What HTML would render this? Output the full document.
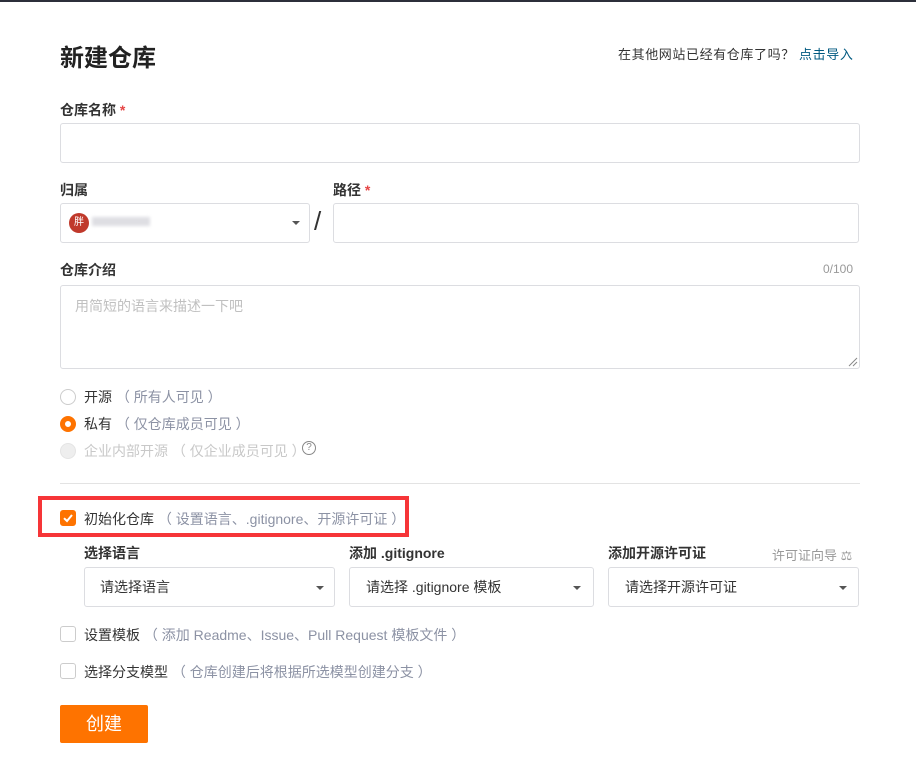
<!DOCTYPE html>
<html><head><meta charset="utf-8"><style>
*{box-sizing:border-box;margin:0;padding:0}
body{width:916px;height:763px;background:#fff;position:relative;overflow:hidden;font-family:"Liberation Sans","Noto Sans CJK SC",sans-serif;color:#333;font-size:14px}
.a{position:absolute;white-space:nowrap}
.box{position:absolute;border:1px solid #dcdde1;border-radius:3px;background:#fff}
.lbl{position:absolute;font-weight:bold;font-size:14px;color:#333;line-height:16px}
.req{color:#e54545}
.caret{position:absolute;width:0;height:0;border-left:4px solid transparent;border-right:4px solid transparent;border-top:4px solid #555}
.radio{position:absolute;width:16px;height:16px;border-radius:50%;border:1px solid #ccc;background:#fff}
.cb{position:absolute;width:16px;height:16px;border-radius:3px;border:1px solid #ccc;background:#fff}
.g{color:#8c92a4}
.t{position:absolute;white-space:nowrap;font-size:14px;line-height:16px}
</style></head><body>
<div class="a" style="left:0;top:0;width:916px;height:2px;background:#2c2f3a"></div>
<div class="a" style="left:60px;top:38px;font-size:24px;font-weight:bold;color:#222">新建仓库</div>
<div class="a" style="left:618px;top:44px;font-size:13px;color:#333;letter-spacing:0.6px">在其他网站已经有仓库了吗？ <span style="color:#005980">点击导入</span></div>

<div class="lbl" style="left:60px;top:102px">仓库名称 <span class="req">*</span></div>
<div class="box" style="left:60px;top:123px;width:800px;height:40px"></div>

<div class="lbl" style="left:60px;top:182px">归属</div>
<div class="box" style="left:60px;top:203px;width:250px;height:40px"></div>
<div class="a" style="left:69px;top:213px;width:20px;height:20px;border-radius:50%;background:#c0392b;color:#fff;font-size:10px;text-align:center;line-height:20px">胖</div>
<div class="a" style="left:92px;top:217px;width:58px;height:9px;background:#dedee3;filter:blur(1.5px)"></div>
<div class="caret" style="left:292px;top:221px"></div>
<div class="a" style="left:314px;top:206px;font-size:26px;color:#333">/</div>
<div class="lbl" style="left:333px;top:182px">路径 <span class="req">*</span></div>
<div class="box" style="left:333px;top:203px;width:526px;height:40px"></div>

<div class="lbl" style="left:60px;top:262px">仓库介绍</div>
<div class="a" style="left:823px;top:262px;font-size:12px;color:#999">0/100</div>
<div class="box" style="left:60px;top:285px;width:800px;height:84px"></div>
<div class="a" style="left:75px;top:296px;font-size:14px;color:#c0c0c0">用简短的语言来描述一下吧</div>
<svg class="a" style="left:848px;top:357px" width="10" height="10"><path d="M1 9L9 1M5 9L9 5" stroke="#888" stroke-width="1"/></svg>

<div class="radio" style="left:60px;top:389px"></div>
<div class="t" style="left:84px;top:389px">开源 <span class="g">（ 所有人可见 ）</span></div>
<div class="radio" style="left:60px;top:416px;border:5px solid #fe7300"></div>
<div class="t" style="left:84px;top:416px">私有 <span class="g">（ 仅仓库成员可见 ）</span></div>
<div class="radio" style="left:60px;top:443px;background:#eee;border-color:#e4e4e4"></div>
<div class="t" style="left:84px;top:443px;color:#c8c8c8">企业内部开源 （ 仅企业成员可见 ）</div>
<div class="a" style="left:302px;top:441px;width:14px;height:14px;border:1px solid #888;border-radius:50%;font-size:10px;color:#888;text-align:center;line-height:12px">?</div>

<div class="a" style="left:60px;top:483px;width:800px;height:1px;background:#e3e3e3"></div>

<div class="a" style="left:38px;top:496px;width:371px;height:41px;border:4px solid #f63538"></div>
<div class="cb" style="left:60px;top:510px;background:#fe7300;border-color:#fe7300"></div>
<svg class="a" style="left:60px;top:510px" width="16" height="16"><path d="M4 8.2L7 11L12 5" stroke="#fff" stroke-width="2" fill="none"/></svg>
<div class="t" style="left:84px;top:511px">初始化仓库 <span class="g">（ 设置语言、.gitignore、开源许可证 ）</span></div>

<div class="lbl" style="left:84px;top:545px">选择语言</div>
<div class="box" style="left:84px;top:567px;width:251px;height:40px"></div>
<div class="t" style="left:100px;top:579px">请选择语言</div>
<div class="caret" style="left:316px;top:586px"></div>
<div class="lbl" style="left:349px;top:545px">添加 .gitignore</div>
<div class="box" style="left:349px;top:567px;width:245px;height:40px"></div>
<div class="t" style="left:366px;top:579px">请选择 .gitignore 模板</div>
<div class="caret" style="left:573px;top:586px"></div>
<div class="lbl" style="left:608px;top:545px">添加开源许可证</div>
<div class="a" style="left:772px;top:545px;font-size:13px;color:#999">许可证向导 ⚖</div>
<div class="box" style="left:608px;top:567px;width:251px;height:40px"></div>
<div class="t" style="left:625px;top:579px">请选择开源许可证</div>
<div class="caret" style="left:839px;top:586px"></div>

<div class="cb" style="left:60px;top:626px"></div>
<div class="t" style="left:84px;top:627px">设置模板 <span class="g">（ 添加 Readme、Issue、Pull Request 模板文件 ）</span></div>
<div class="cb" style="left:60px;top:663px"></div>
<div class="t" style="left:84px;top:664px">选择分支模型 <span class="g">（ 仓库创建后将根据所选模型创建分支 ）</span></div>

<div class="a" style="left:60px;top:705px;width:88px;height:38px;background:#fe7300;border-radius:2px;color:#fff;font-size:18px;text-align:center;line-height:38px">创建</div>
</body></html>
